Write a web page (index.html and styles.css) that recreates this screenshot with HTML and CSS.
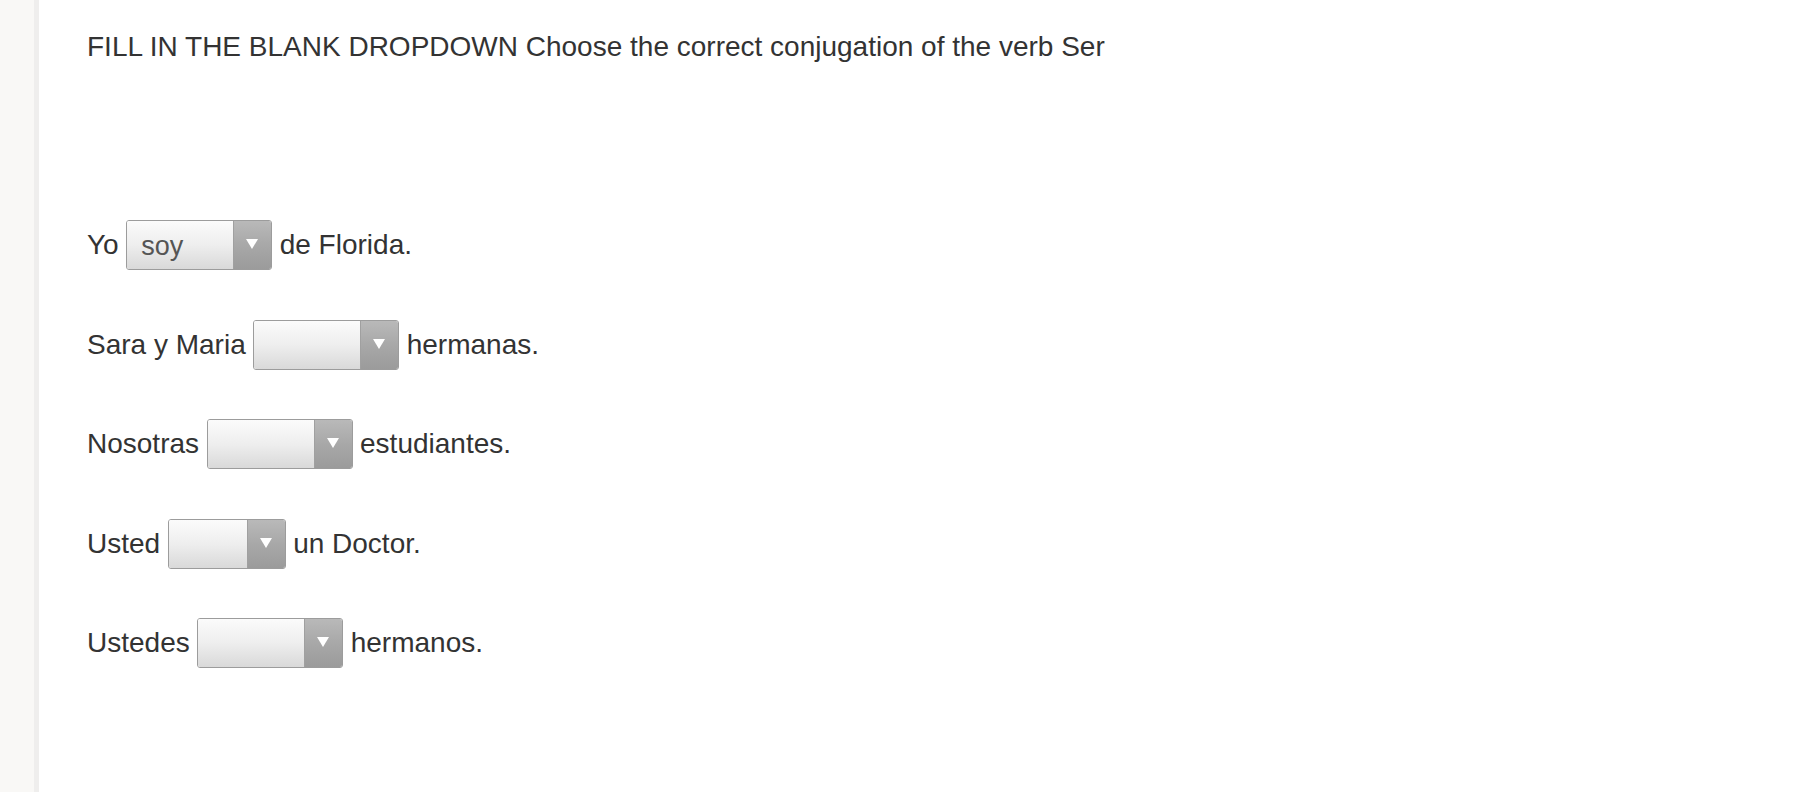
FILE: index.html
```html
<!DOCTYPE html>
<html lang="es">
<head>
<meta charset="utf-8">
<title>Fill in the blank dropdown</title>
<link rel="stylesheet" href="styles.css">
</head>
<body>
<div class="page">
  <aside class="sidebar"></aside>
  <main class="content">
    <h1 class="title">FILL IN THE BLANK DROPDOWN Choose the correct conjugation of the verb Ser</h1>
    <div class="questions">
      <div class="row">
        <span>Yo</span>
        <span class="select"><span class="value">soy</span><span class="arrow"></span></span>
        <span>de Florida.</span>
      </div>
      <div class="row">
        <span>Sara y Maria</span>
        <span class="select"><span class="value"></span><span class="arrow"></span></span>
        <span>hermanas.</span>
      </div>
      <div class="row">
        <span>Nosotras</span>
        <span class="select"><span class="value"></span><span class="arrow"></span></span>
        <span>estudiantes.</span>
      </div>
      <div class="row">
        <span>Usted</span>
        <span class="select narrow"><span class="value"></span><span class="arrow"></span></span>
        <span>un Doctor.</span>
      </div>
      <div class="row">
        <span>Ustedes</span>
        <span class="select"><span class="value"></span><span class="arrow"></span></span>
        <span>hermanos.</span>
      </div>
    </div>
  </main>
</div>
</body>
</html>
```

FILE: styles.css
```css
html, body {
  margin: 0;
  padding: 0;
  background: #ffffff;
}

body {
  font-family: "Liberation Sans", Arial, Helvetica, sans-serif;
  color: #333333;
}

.page {
  display: flex;
  min-height: 792px;
}

.sidebar {
  width: 34px;
  flex: 0 0 34px;
  background: #f9f8f6;
  border-right: 5px solid #efeeed;
  box-sizing: content-box;
}

.content {
  flex: 1;
  padding-left: 48px;
}

.title {
  margin: 0;
  padding-top: 31px;
  font-size: 28px;
  font-weight: normal;
  line-height: 32px;
  color: #333333;
}

.questions {
  padding-top: 157px;
  display: flex;
  flex-direction: column;
  gap: 49.5px;
}

.row {
  display: flex;
  align-items: center;
  gap: 7.5px;
  height: 50px;
  font-size: 28px;
  color: #333333;
}

.select {
  display: flex;
  width: 146px;
  height: 50px;
  box-sizing: border-box;
  border: 1px solid #9c9c9c;
  border-radius: 3px;
  overflow: hidden;
}

.select.narrow {
  width: 118px;
}

.value {
  flex: 1;
  display: flex;
  align-items: center;
  padding-left: 14px;
  padding-top: 2px;
  font-size: 27px;
  color: #555555;
  background: linear-gradient(to bottom, #fbfbfb 0%, #eeeeee 50%, #d9d9d9 100%);
}

.arrow {
  width: 37px;
  flex: 0 0 37px;
  position: relative;
  background: linear-gradient(to bottom, #b9b9b9 0%, #a8a8a8 50%, #9b9b9b 100%);
  border-left: 1px solid #a0a0a0;
}

.arrow::after {
  content: "";
  position: absolute;
  left: 12px;
  top: 18px;
  width: 0;
  height: 0;
  border-left: 6px solid transparent;
  border-right: 6px solid transparent;
  border-top: 10px solid #ffffff;
}
```
